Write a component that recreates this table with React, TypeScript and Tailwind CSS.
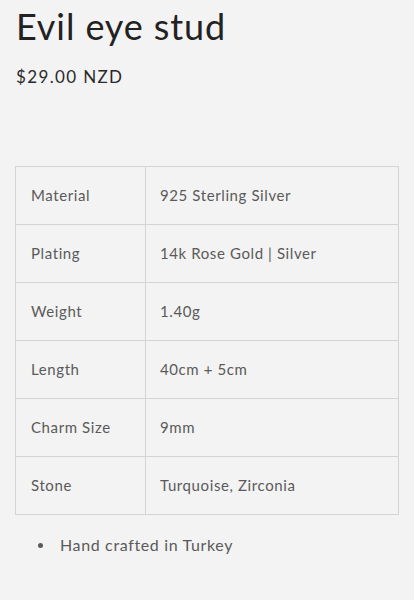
const specs: [string, string][] = [
  ["Material", "925 Sterling Silver"],
  ["Plating", "14k Rose Gold | Silver"],
  ["Weight", "1.40g"],
  ["Length", "40cm + 5cm"],
  ["Charm Size", "9mm"],
  ["Stone", "Turquoise, Zirconia"],
];

export default function App() {
  return (
    <div
      className="min-h-[600px] w-full bg-[#f3f3f3] px-4 pt-[6px] text-[#121212]"
      style={{ fontFamily: "Lato, 'Open Sans', sans-serif" }}
    >
      <h1 className="text-[36px] leading-[40px] tracking-[0.025em] text-[#222]">Evil eye stud</h1>
      <p className="mt-[20px] text-[17px] leading-[22px] tracking-[0.08em] text-[#2a2a2a]">$29.00 NZD</p>

      <table className="-ml-px mt-[78px] w-[384px] border-collapse border border-[#d4d4d4] text-[15px] tracking-[0.04em] text-[#5a5a5a]">
        <tbody>
          {specs.map(([k, v]) => (
            <tr key={k} className="h-[58px]">
              <td className="w-[130px] border border-[#d4d4d4] pl-[15px]">{k}</td>
              <td className="border border-[#d4d4d4] pl-[14px]">{v}</td>
            </tr>
          ))}
        </tbody>
      </table>

      <ul className="mt-[19px] text-[16px] leading-[22px] tracking-[0.04em] text-[#5a5a5a]">
        <li className="flex items-center gap-[17px] pl-[22px]">
          <span className="h-[5px] w-[5px] rounded-full bg-[#5a5a5a]" />
          <span>Hand crafted in Turkey</span>
        </li>
      </ul>
    </div>
  );
}
